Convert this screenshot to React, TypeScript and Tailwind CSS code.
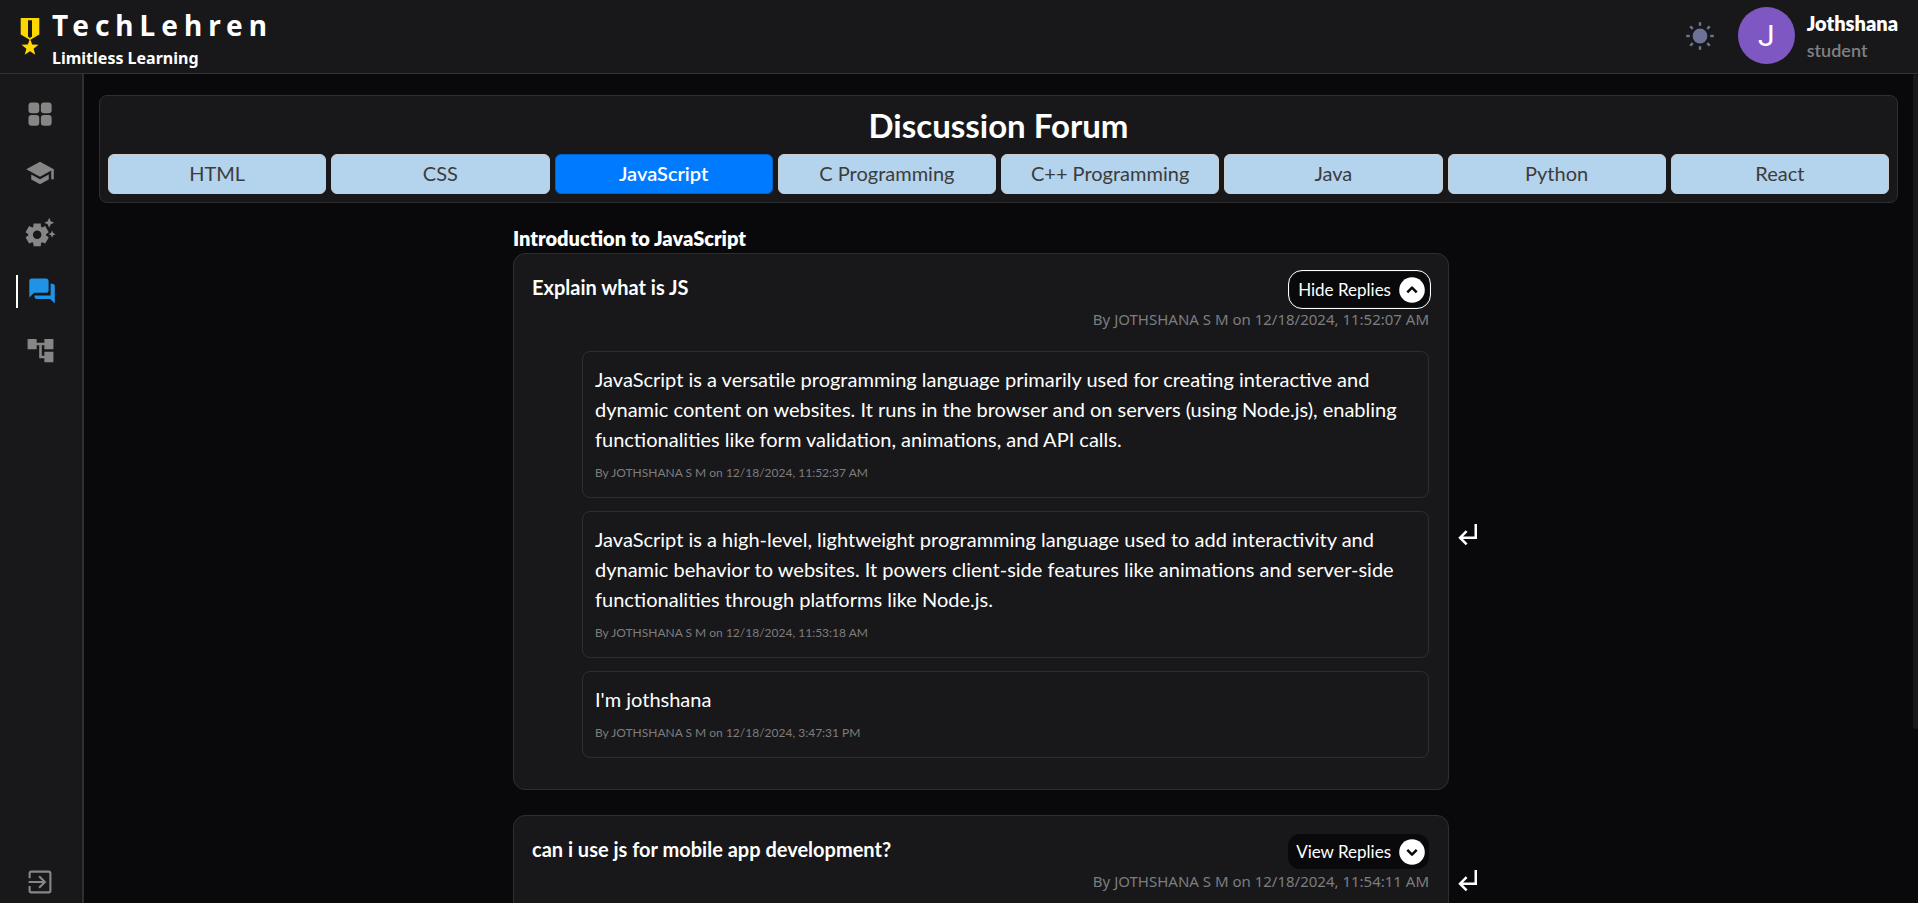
import { useState } from "react";
import type { ReactNode } from "react";
import { MdSchool, MdSettingsSuggest, MdAccountTree, MdSubdirectoryArrowLeft } from "react-icons/md";

const tabs = ["HTML", "CSS", "JavaScript", "C Programming", "C++ Programming", "Java", "Python", "React"];

interface Reply {
  text: string;
  meta: string;
}

interface Question {
  title: string;
  meta: string;
  replies: Reply[];
}

const questions: Question[] = [
  {
    title: "Explain what is JS",
    meta: "By JOTHSHANA S M on 12/18/2024, 11:52:07 AM",
    replies: [
      {
        text: "JavaScript is a versatile programming language primarily used for creating interactive and dynamic content on websites. It runs in the browser and on servers (using Node.js), enabling functionalities like form validation, animations, and API calls.",
        meta: "By JOTHSHANA S M on 12/18/2024, 11:52:37 AM",
      },
      {
        text: "JavaScript is a high-level, lightweight programming language used to add interactivity and dynamic behavior to websites. It powers client-side features like animations and server-side functionalities through platforms like Node.js.",
        meta: "By JOTHSHANA S M on 12/18/2024, 11:53:18 AM",
      },
      { text: "I'm jothshana", meta: "By JOTHSHANA S M on 12/18/2024, 3:47:31 PM" },
    ],
  },
  {
    title: "can i use js for mobile app development?",
    meta: "By JOTHSHANA S M on 12/18/2024, 11:54:11 AM",
    replies: [],
  },
];

function MedalIcon() {
  return (
    <svg viewBox="0 0 20 38" className="h-[38px] w-5 shrink-0" aria-hidden="true">
      <path fill="#ffd700" fillRule="evenodd" d="M.7 0H19.3V16.5L10 22 .7 16.5ZM8 2.2V18.6L10 20 12 18.6V2.2Z" />
      <path fill="#ffd700" d="m10 20.8 2.2 5.8 6.3.2-4.9 3.9 1.7 6.1-5.3-3.5-5.3 3.5 1.7-6.1-4.9-3.9 6.3-.2z" />
    </svg>
  );
}

function SunIcon() {
  return (
    <svg viewBox="0 0 28 28" className="size-7" aria-hidden="true">
      <circle cx="14" cy="14" r="7.4" fill="#6d7397" />
      {[0, 45, 90, 135, 180, 225, 270, 315].map((angle) => (
        <rect key={angle} x="12.8" y="0.2" width="2.4" height="3.6" fill="#6d7397" transform={`rotate(${angle} 14 14)`} />
      ))}
    </svg>
  );
}

function GridIcon() {
  return (
    <svg viewBox="0 0 24 24" className="size-[30px]" fill="currentColor" aria-hidden="true">
      <rect x="2.8" y="2.8" width="8.6" height="8.6" rx="2.4" />
      <rect x="12.7" y="2.8" width="8.6" height="8.6" rx="2.4" />
      <rect x="2.8" y="12.7" width="8.6" height="8.6" rx="2.4" />
      <rect x="12.7" y="12.7" width="8.6" height="8.6" rx="2.4" />
    </svg>
  );
}

function ForumIcon() {
  return (
    <svg viewBox="0 0 26 26" className="size-[26px]" fill="currentColor" aria-hidden="true">
      <path d="M3 .6h14a2.6 2.6 0 0 1 2.6 2.6v9a2.6 2.6 0 0 1-2.6 2.6H5.2L.3 19.5V3.2A2.6 2.6 0 0 1 3 .6Z" />
      <path d="M21.6 5.7h1.6a2.6 2.6 0 0 1 2.6 2.6v17.3l-4.7-4.5H7.8a2.4 2.4 0 0 1-2.3-2.4v-1.3h16.1Z" />
    </svg>
  );
}

function ExitIcon() {
  return (
    <svg viewBox="0 0 24 24" className="size-[30px]" fill="none" stroke="currentColor" strokeWidth="1.7" aria-hidden="true">
      <path d="M3.7 8.9V5a1.3 1.3 0 0 1 1.3-1.3h14A1.3 1.3 0 0 1 20.3 5v14a1.3 1.3 0 0 1-1.3 1.3H5A1.3 1.3 0 0 1 3.7 19v-3.9" />
      <path d="M2.9 12h12.4M11.3 7.4l4.6 4.6-4.6 4.6" />
    </svg>
  );
}

function CircleChevron({ up }: { up: boolean }) {
  return (
    <svg viewBox="0 0 26 26" className="size-[26px]" aria-hidden="true">
      <circle cx="13" cy="13" r="12.8" fill="#fff" />
      <path
        d={up ? "M8.3 15.4 13 10.7l4.7 4.7" : "M8.3 10.9l4.7 4.7 4.7-4.7"}
        fill="none"
        stroke="#09090b"
        strokeWidth="2.5"
        strokeLinejoin="round"
      />
    </svg>
  );
}

function NavItem({ label, active, children }: { label: string; active?: boolean; children: ReactNode }) {
  return (
    <li className="flex h-[58px] items-center">
      <a
        href="#"
        aria-label={label}
        aria-current={active ? "page" : undefined}
        className={
          active
            ? "flex h-[33px] w-[50px] items-center justify-center border-l-2 border-white text-[#1f93e5]"
            : "flex h-[33px] w-12 items-center justify-center text-[#868686]"
        }
      >
        {children}
      </a>
    </li>
  );
}

function QuestionRow({ question }: { question: Question }) {
  const [open, setOpen] = useState(question.replies.length > 0);
  return (
    <li className="flex items-center">
      <article className="mb-[25px] flex-1 rounded-xl border border-[#2e2e31] bg-[#18181a] pt-[18px] pr-[19px] pb-[26px] pl-[18px]">
        <div className="flex items-start justify-between">
          <h3 className="text-xl leading-[30px] font-bold">{question.title}</h3>
          <button
            type="button"
            aria-expanded={open}
            onClick={() => setOpen(!open)}
            className={
              open
                ? "flex h-[35px] items-center gap-2 rounded-xl bg-[#09090b] pr-1 pl-2 text-[17px] outline-1 outline-offset-1 outline-white"
                : "flex h-[35px] items-center gap-2 rounded-xl bg-[#09090b] pr-1 pl-2 text-[17px]"
            }
          >
            {open ? "Hide Replies" : "View Replies"}
            <CircleChevron up={open} />
          </button>
        </div>
        <p className="text-right font-['Noto_Sans',sans-serif] text-[15px] leading-6 text-[#7d7d7f]">{question.meta}</p>
        {open && (
          <ul className="mt-5 mb-[5px] ml-[50px] flex flex-col gap-[13px]">
            {question.replies.map((reply) => (
              <li key={reply.meta} className="rounded-lg border border-[#2e2e31] px-3 py-3">
                <p className="text-xl leading-[30px]">{reply.text}</p>
                <p className="mt-[7px] text-xs leading-6 text-[#7d7d7f]">{reply.meta}</p>
              </li>
            ))}
          </ul>
        )}
      </article>
      <button type="button" aria-label="Reply" className="w-[35px] pl-[3px]">
        <MdSubdirectoryArrowLeft className="size-[30px]" />
      </button>
    </li>
  );
}

export default function App() {
  const [active, setActive] = useState("JavaScript");
  return (
    <div className="flex h-screen flex-col overflow-hidden bg-[#09090b] font-['Lato',sans-serif] text-white">
      <header className="flex h-[74px] shrink-0 items-center justify-between border-b border-[#333335] bg-[#18181a] px-5">
        <div className="flex items-center gap-3">
          <MedalIcon />
          <div className="pt-1 font-['Noto_Sans',sans-serif] font-bold">
            <p className="text-[28px] leading-[38px] tracking-[6px]">TechLehren</p>
            <p className="text-base leading-7">Limitless Learning</p>
          </div>
        </div>
        <div className="flex items-center pb-0.5">
          <button type="button" aria-label="Toggle theme" className="mr-6">
            <SunIcon />
          </button>
          <div className="mr-3 flex size-[57px] items-center justify-center rounded-full bg-[#7e57c2] font-['Roboto',sans-serif] text-[30px]">
            J
          </div>
          <div>
            <p className="text-xl leading-7 font-extrabold">Jothshana</p>
            <p className="text-lg leading-[26px] font-semibold text-[#808082]">student</p>
          </div>
        </div>
      </header>

      <div className="flex min-h-0 flex-1">
        <nav aria-label="Main" className="flex w-[84px] shrink-0 flex-col justify-between border-r-2 border-[#2f2f31] bg-[#18181a] pt-[11px] pl-4">
          <ul className="flex flex-col gap-px">
            <NavItem label="Dashboard"><GridIcon /></NavItem>
            <NavItem label="Courses"><MdSchool className="size-[30px]" /></NavItem>
            <NavItem label="Tools"><MdSettingsSuggest className="size-[34px]" /></NavItem>
            <NavItem label="Discussion forum" active><ForumIcon /></NavItem>
            <NavItem label="Roadmap"><MdAccountTree className="size-[31px]" /></NavItem>
          </ul>
          <button type="button" aria-label="Log out" className="mb-[5px] flex h-8 w-12 items-center justify-center text-[#868686]">
            <ExitIcon />
          </button>
        </nav>

        <main className="min-w-0 flex-1 overflow-hidden px-[15px] pt-[21px]">
          <section className="rounded-lg border border-[#2e2e31] bg-[#18181a] px-2 pb-2">
            <h1 className="py-[5px] text-center text-[33px] leading-[48px] font-bold">Discussion Forum</h1>
            <div role="tablist" className="grid grid-cols-8 gap-[5px]">
              {tabs.map((tab) => (
                <button
                  key={tab}
                  type="button"
                  role="tab"
                  aria-selected={tab === active}
                  onClick={() => setActive(tab)}
                  className={
                    tab === active
                      ? "h-10 rounded-md border border-[#0062cc] bg-[#007bff] pb-0.5 text-xl font-semibold text-white"
                      : "h-10 rounded-md border border-[#cccccc] bg-[#b4d3ed] pb-0.5 text-xl text-[#3c3c3c]"
                  }
                >
                  {tab}
                </button>
              ))}
            </div>
          </section>

          <section className="mx-auto mt-5 max-w-[971px]">
            <h2 className="text-xl leading-[30px] font-extrabold">Introduction to JavaScript</h2>
            <ul>
              {questions.map((question) => (
                <QuestionRow key={question.title} question={question} />
              ))}
            </ul>
          </section>
        </main>
        <div className="h-[79%] w-[5px] shrink-0 rounded-full bg-[#18181a]" />
      </div>
    </div>
  );
}
